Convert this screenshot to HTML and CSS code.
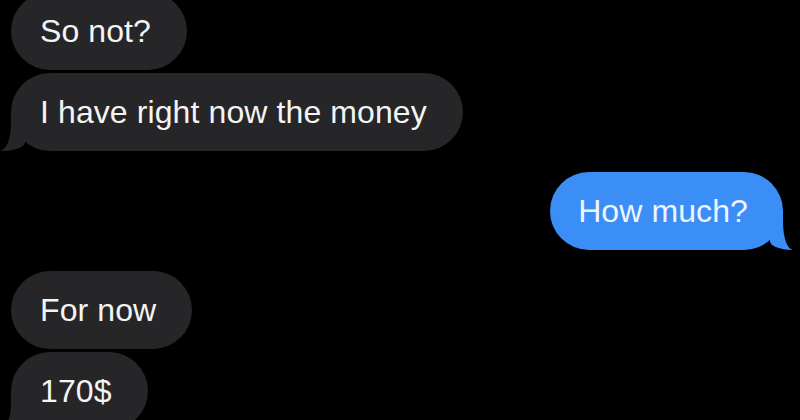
FILE: index.html
```html
<!DOCTYPE html>
<html lang="en">
<head>
<meta charset="utf-8">
<title>Messages</title>
<link rel="stylesheet" href="styles.css">
</head>
<body>
  <main class="thread">
    <div class="bubble in">So not?</div>
    <div class="bubble in tail">I have right now the money</div>
    <div class="bubble out tail group">How much?</div>
    <div class="bubble in group">For now</div>
    <div class="bubble in tail">170$</div>
  </main>
</body>
</html>
```
FILE: styles.css
```css
html, body {
  margin: 0;
  padding: 0;
  background: #000;
  height: 100%;
  overflow: hidden;
}

.thread {
  display: flex;
  flex-direction: column;
  align-items: flex-start;
  gap: 3px;
  margin-top: -8px;
  padding: 0 17px 0 11px;
  font-family: "Liberation Sans", Arial, sans-serif;
  font-size: 32px;
  letter-spacing: 0.1px;
  color: #f4f4f4;
}

.bubble {
  position: relative;
  height: 78px;
  line-height: 78px;
  border-radius: 39px;
  white-space: nowrap;
}

.in {
  background: #262628;
  padding: 0 36px 0 29px;
}

.out {
  align-self: flex-end;
  background: #3b8ef5;
  color: #eef5ff;
  padding: 0 35px 0 28px;
}

.group {
  margin-top: 18px;
}

/* incoming tail (bottom-left) */
.in.tail::before {
  content: "";
  position: absolute;
  left: -16px;
  bottom: 0;
  width: 30px;
  height: 40px;
  background: #262628;
  border-bottom-right-radius: 22px 9px;
}
.in.tail::after {
  content: "";
  position: absolute;
  left: -22px;
  bottom: 0;
  width: 22px;
  height: 40px;
  background: #000;
  border-bottom-right-radius: 12px 26px;
}

/* outgoing tail (bottom-right) */
.out.tail::before {
  content: "";
  position: absolute;
  right: -16px;
  bottom: 0;
  width: 29px;
  height: 40px;
  background: #3b8ef5;
  border-bottom-left-radius: 22px 9px;
}
.out.tail::after {
  content: "";
  position: absolute;
  right: -22px;
  bottom: 0;
  width: 22px;
  height: 40px;
  background: #000;
  border-bottom-left-radius: 10px 28px;
}
```
